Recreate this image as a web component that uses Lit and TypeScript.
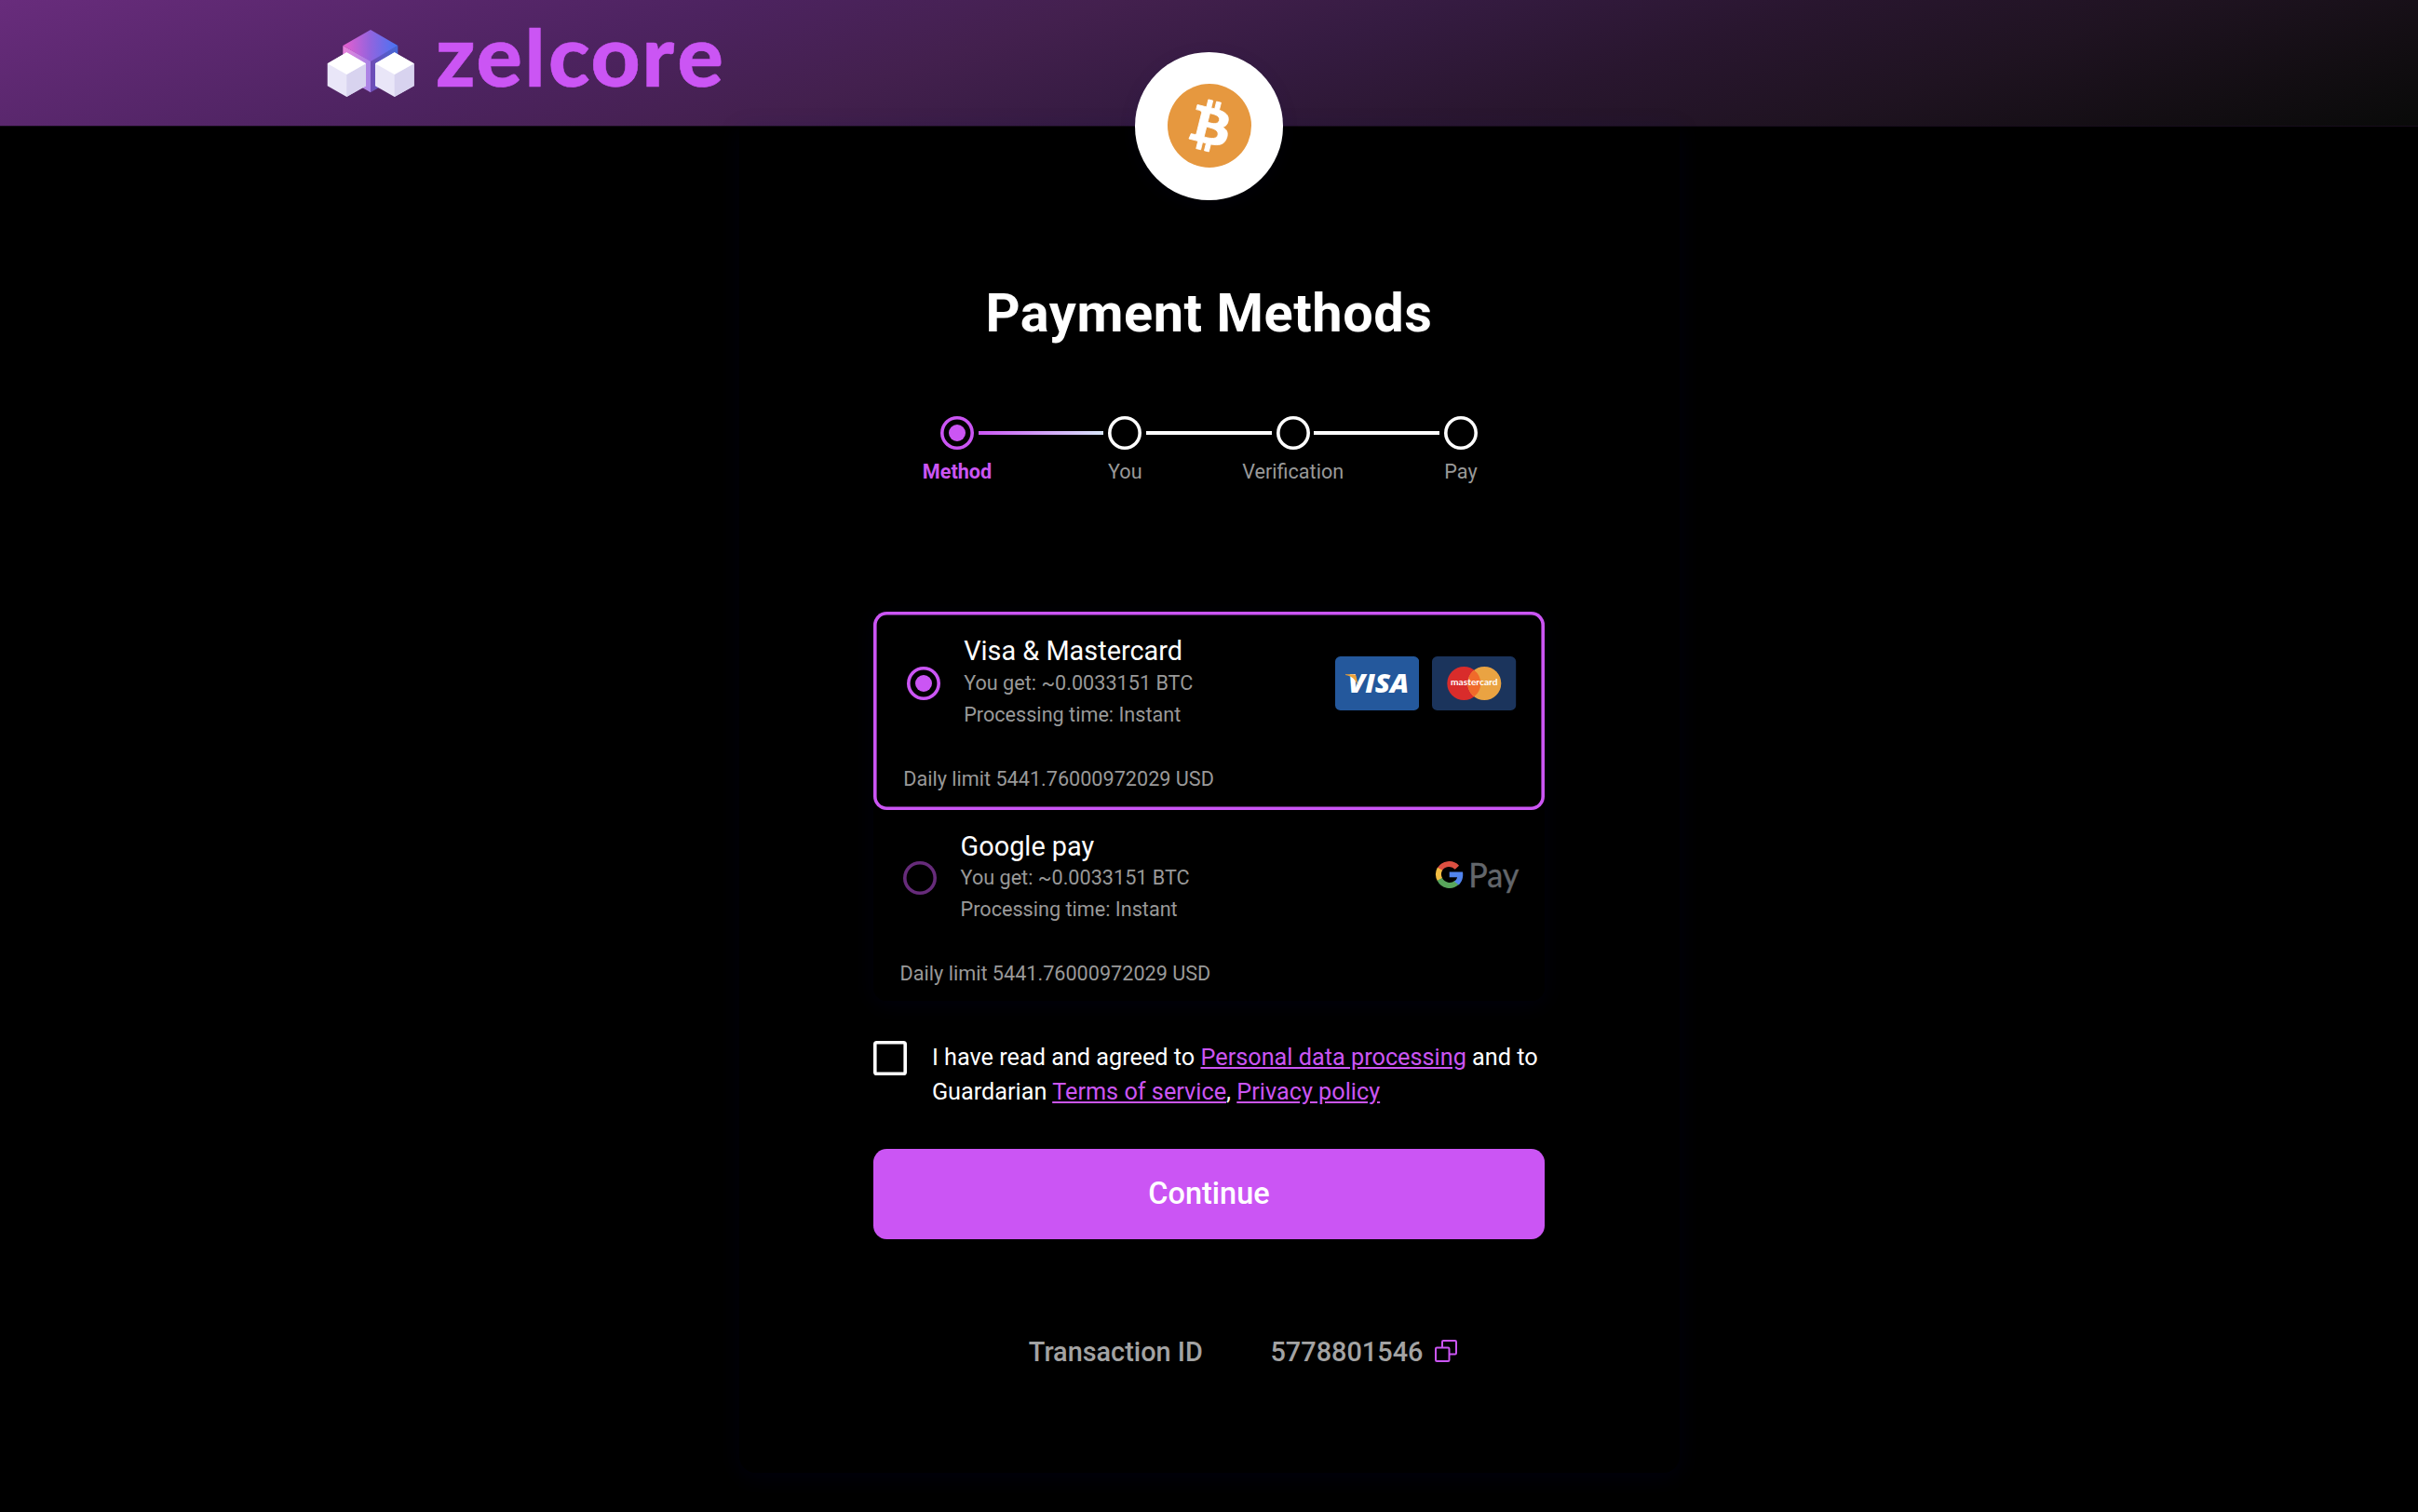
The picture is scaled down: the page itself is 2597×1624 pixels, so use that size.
import { LitElement, html, css, nothing } from "lit";
import { customElement, property } from "lit/decorators.js";

const zelcoreLogo = html`<svg class="logo" viewBox="0 -30 460 135" width="460" height="135" aria-label="zelcore">
  <defs>
    <linearGradient id="lid" x1="0" y1="0" x2="1" y2="0">
      <stop offset="0.05" stop-color="#e05fd0" />
      <stop offset="0.5" stop-color="#9264de" />
      <stop offset="1" stop-color="#4674f4" />
    </linearGradient>
    <linearGradient id="sideL" x1="0" y1="0" x2="1" y2="0">
      <stop offset="0" stop-color="#ea83dc" />
      <stop offset="1" stop-color="#a583e6" />
    </linearGradient>
    <linearGradient id="sideR" x1="0" y1="0" x2="1" y2="0">
      <stop offset="0" stop-color="#6f4bb4" />
      <stop offset="1" stop-color="#4468d8" />
    </linearGradient>
  </defs>
  <path d="M17.3 19 47 35.3V69.3L17.3 52Z" fill="url(#sideL)" />
  <path d="M76.3 19 47 35.3V69.3L76.3 52Z" fill="url(#sideR)" />
  <path d="M47 2 76.3 19 47 36 17.3 19Z" fill="url(#lid)" />
  <path d="M21.3 26.3 42 38.3V62.3L21.3 74 .7 62.3V38.3Z" fill="#e9e6f8" />
  <path d="M21.3 50 42 38.3V62.3L21.3 74Z" fill="#d8d3ef" />
  <path d="M21.3 26.3 42 38.3 21.3 50 .7 38.3Z" fill="#fff" />
  <path d="M72.7 26.3 93.7 38.3V62.3L72.7 74 52 62.3V38.3Z" fill="#e9e6f8" />
  <path d="M72.7 50 93.7 38.3V62.3L72.7 74Z" fill="#d8d3ef" />
  <path d="M72.7 26.3 93.7 38.3 72.7 50 52 38.3Z" fill="#fff" />
  <text class="wordmark" x="117 160.500 213 238 283.500 338.500 376.500" y="63.300">ze<tspan class="short">l</tspan>core</text>
</svg>`;

const bitcoinIcon = html`<svg class="coin-icon" viewBox="0 0 32 32" width="90" height="90">
  <circle cx="16" cy="16" r="16" fill="#e6983f" />
  <path fill="#fff" stroke="#fff" stroke-width="0.300" d="M23.189 14.02c.314-2.096-1.283-3.223-3.465-3.975l.708-2.84-1.728-.43-.69 2.765c-.454-.114-.92-.22-1.385-.326l.695-2.783L15.596 6l-.708 2.839c-.376-.086-.746-.17-1.104-.26l.002-.009-2.384-.595-.46 1.846s1.283.294 1.256.312c.7.175.826.638.805 1.006l-.806 3.235c.048.012.11.03.18.057l-.183-.045-1.13 4.532c-.086.212-.303.531-.793.41.018.025-1.256-.313-1.256-.313l-.858 1.978 2.25.561c.418.105.828.215 1.231.318l-.715 2.872 1.727.43.708-2.84c.472.127.93.245 1.378.357l-.706 2.828 1.728.43.715-2.866c2.948.558 5.164.333 6.097-2.333.752-2.146-.037-3.385-1.588-4.192 1.13-.26 1.98-1.003 2.207-2.538zm-3.95 5.538c-.533 2.147-4.148.986-5.32.695l.95-3.805c1.172.293 4.929.872 4.37 3.11zm.535-5.569c-.487 1.953-3.495.96-4.47.717l.86-3.45c.975.243 4.118.696 3.61 2.733z" />
</svg>`;

const visaBadge = html`<svg viewBox="0 0 90.2 58" width="90.2" height="58">
  <rect width="90.2" height="58" rx="5.6" fill="#24589c" />
  <text class="visa" x="13.800" y="39.200" textLength="65.500" lengthAdjust="spacingAndGlyphs">VISA</text>
  <path d="M11 19.200h8.400c1.900 0 2.800.7 3.200 2.300l2 9.500C22 25 17.500 21 11 20Z" fill="#eba23b" />
</svg>`;

const mastercardBadge = html`<svg viewBox="0 0 90.2 58" width="90.2" height="58">
  <rect width="90.2" height="58" rx="5.6" fill="#1b345c" />
  <circle cx="34.300" cy="29" r="18" fill="#d92c2b" />
  <circle cx="56.300" cy="29" r="18" fill="#eaa342" />
  <path d="M45.300 14.750a18 18 0 0 1 0 28.500a18 18 0 0 1 0-28.500Z" fill="#f06a2a" />
  <text class="mc" x="20" y="31.200" textLength="50.500" lengthAdjust="spacingAndGlyphs">mastercard</text>
</svg>`;

const googlePayBadge = html`<svg viewBox="0 -19 92 80" width="92" height="80">
  <g fill="none" stroke-width="6">
    <path d="M24.900 9.700A11.800 11.800 0 0 0 6.300 11.700" stroke="#dc4f41" />
    <path d="M6.500 11.300A11.800 11.800 0 0 0 6.500 22.800" stroke="#f2bc42" />
    <path d="M6.300 22.400A11.800 11.800 0 0 0 24.600 26.100" stroke="#58a55b" />
  </g>
  <path d="M16.700 14.600H31c.9 5.400-.6 10.500-4.200 13.800L22 24.700c1.600-1.100 2.700-2.600 3.100-4.500H16.700Z" fill="#5184ee" />
  <text class="gpay" x="37.300" y="30.500" textLength="54.200" lengthAdjust="spacingAndGlyphs">Pay</text>
</svg>`;

const copyIcon = html`<svg class="copy" viewBox="0 0 24 24" width="24" height="24" fill="none" stroke="#cb55f4" stroke-width="2">
  <path d="M8 8V2.200Q8 1 9.200 1H21.800Q23 1 23 2.200V14.300Q23 15.500 21.800 15.500H16" />
  <rect x="1" y="8.500" width="14.500" height="14.500" rx="1.200" />
</svg>`;

@customElement("step-track")
class StepTrack extends LitElement {
  @property({ type: Array }) steps: string[] = [];
  @property({ type: Number }) current = 0;

  static styles = css`
    :host { display: block; }
    .track { display: grid; grid-template-columns: repeat(4, 180.35px); justify-content: center; }
    .step { display: grid; grid-template-columns: minmax(0, 1fr) 36px minmax(0, 1fr); row-gap: 11px; align-items: center; }
    .dot { grid-column: 2; width: 36px; height: 36px; box-shadow: inset 0 0 0 3.600px #fff; border-radius: 50%; display: grid; place-items: center; }
    .line { height: 4px; background: #fff; margin-left: 4.800px; width: 134.500px; }
    .label { grid-column: 1 / 4; text-align: center; font-size: 21.640px; line-height: 25px; color: #999; }
    .active .dot { box-shadow: inset 0 0 0 3.600px #cb55f4; }
    .active .dot::after { content: ""; width: 18px; height: 18px; border-radius: 50%; background: #cb55f4; }
    .active .line { background: linear-gradient(90deg, #cb55f4, #d9e8fb); }
    .active .label { color: #cb55f4; font-weight: 700; }
  `;

  render() {
    return html`<div class="track">
      ${this.steps.map((s, i) => html`<div class="step ${i === this.current ? "active" : ""}">
        <span class="dot"></span>
        ${i < this.steps.length - 1 ? html`<span class="line"></span>` : nothing}
        <span class="label">${s}</span>
      </div>`)}
    </div>`;
  }
}

@customElement("pay-option")
class PayOption extends LitElement {
  @property() name = "";
  @property() amount = "";
  @property() time = "";
  @property() limit = "";
  @property({ type: Boolean }) selected = false;

  static styles = css`
    :host { display: block; }
    .option { padding: 21.900px 27px 11.800px; border-radius: 14.400px; background: #000; }
    .selected { padding: 25px 30.600px 15.700px; box-shadow: inset 0 0 0 3.600px #cb55f4; }
    .top { display: flex; align-items: center; }
    .radio { width: 36.100px; height: 36.100px; margin-left: 5.400px; box-shadow: inset 0 0 0 3.600px #662b7a; border-radius: 50%; display: grid; place-items: center; }
    .selected .radio { box-shadow: inset 0 0 0 3.600px #cb55f4; }
    .selected .radio::after { content: ""; width: 18px; height: 18px; border-radius: 50%; background: #cb55f4; }
    .text { flex: 1; margin-left: 25.300px; color: #999; font-size: 21.640px; line-height: 34.270px; }
    .name { color: #fff; font-size: 28.860px; }
    .marks { display: flex; gap: 14.400px; }
    .limit { margin-top: 34.700px; padding-left: 1.800px; color: #999; font-size: 21.640px; line-height: 34.270px; }
  `;

  render() {
    return html`<div class="option ${this.selected ? "selected" : ""}">
      <div class="top">
        <span class="radio"></span>
        <div class="text">
          <div class="name">${this.name}</div>
          <div>You get: ${this.amount}</div>
          <div>Processing time: ${this.time}</div>
        </div>
        <div class="marks"><slot></slot></div>
      </div>
      <div class="limit">Daily limit ${this.limit}</div>
    </div>`;
  }
}

@customElement("app-root")
class AppRoot extends LitElement {
  static styles = css`
    :host { display: block; min-height: 1624px; background: #000; color: #fff; font-family: Roboto, "Liberation Sans", sans-serif; overflow: hidden; }
    svg { display: block; }
    .header { box-sizing: border-box; height: 136px; padding-left: 351px; border-bottom: 1px solid #170c1c; background: linear-gradient(162deg, #682c7c 0%, #4d2360 26%, #43204e 40%, #351b41 52%, #29162f 65%, #1f1321 78%, #130e13 90%, #090a09 100%) border-box; }
    .wordmark { font-family: Lato, sans-serif; font-weight: 900; font-size: 92px; fill: #cb55f4; stroke: #cb55f4; stroke-width: 0.600px; }
    .short { font-size: 83px; }
    .card { position: relative; box-sizing: border-box; width: 1010px; height: 1447px; margin: -0.700px auto 0; padding: 0 144.300px; border-radius: 0 0 18px 18px; box-shadow: 0 4px 26px rgba(10, 10, 110, 0.13); }
    .coin { position: absolute; left: 425.700px; top: -79.400px; width: 158.700px; height: 158.700px; border-radius: 50%; background: #fff; display: grid; place-items: center; box-shadow: 0 4px 20px rgba(10, 10, 110, 0.08); }
    .title { margin: 0; padding-top: 166.300px; font-size: 57.700px; line-height: 68px; font-weight: 700; letter-spacing: 0.550px; text-align: center; }
    .steps { margin-top: 77.200px; margin-inline: -20px; }
    .options { margin-top: 138.500px; border-radius: 14.400px; box-shadow: 0 4px 24px rgba(10, 10, 110, 0.12); }
    .visa { font: italic 800 28.500px "Open Sans", sans-serif; fill: #fff; }
    .mc { font: 700 9.800px Lato, sans-serif; fill: #fff; }
    .gpay { font: 400 36px Lato, sans-serif; fill: #63666b; stroke: #63666b; stroke-width: 0.400px; }
    .agree { display: flex; gap: 27px; margin-top: 43.300px; }
    .box { flex: none; width: 36.100px; height: 36.100px; box-shadow: inset 0 0 0 3.600px #fff; border-radius: 3.600px; }
    .terms { font-size: 25.250px; line-height: 36.070px; white-space: nowrap; }
    .terms a { color: #cb55f4; text-decoration: underline; }
    .continue { display: block; width: 721.400px; height: 97.400px; margin-top: 43.300px; border: 0; border-radius: 14.400px; background: #cb55f4; color: #fff; font: 500 32.460px/1 Roboto, sans-serif; }
    .txn { display: flex; align-items: center; margin-top: 102.200px; padding-left: 167px; color: #a3a3a3; font-size: 28.860px; line-height: 36px; font-weight: 500; white-space: nowrap; }
    .txn-id { margin-left: 72.700px; margin-right: 13px; padding-top: 1px; }
    .copy { margin-bottom: 1px; }
  `;

  render() {
    return html`
      <header class="header">${zelcoreLogo}</header>
      <main class="card">
        <div class="coin">${bitcoinIcon}</div>
        <h1 class="title">Payment Methods</h1>
        <step-track class="steps" .steps=${["Method", "You", "Verification", "Pay"]} .current=${0}></step-track>
        <section class="options">
          <pay-option selected name="Visa &amp; Mastercard" amount="~0.0033151 BTC" time="Instant" limit="5441.76000972029 USD">${visaBadge}${mastercardBadge}</pay-option>
          <pay-option name="Google pay" amount="~0.0033151 BTC" time="Instant" limit="5441.76000972029 USD">${googlePayBadge}</pay-option>
        </section>
        <div class="agree">
          <span class="box"></span>
          <div class="terms">I have read and agreed to <a>Personal data processing</a> and to<br />Guardarian <a>Terms of service</a>, <a>Privacy policy</a></div>
        </div>
        <button class="continue">Continue</button>
        <div class="txn"><span>Transaction ID</span><span class="txn-id">5778801546</span>${copyIcon}</div>
      </main>
    `;
  }
}
